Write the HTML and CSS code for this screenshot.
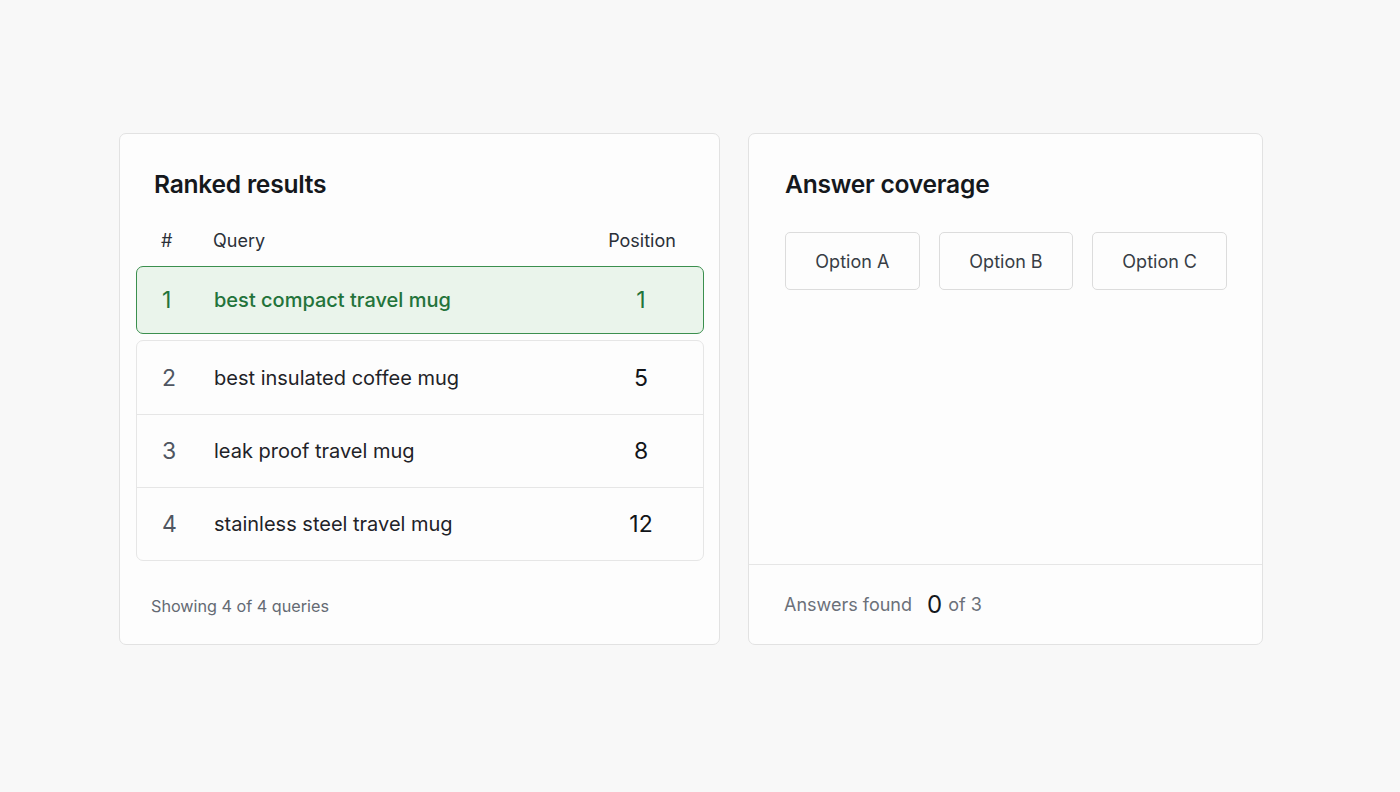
FILE: index.html
```html
<!DOCTYPE html>
<html lang="en">
<head>
<meta charset="utf-8">
<title>Ranked results</title>
<link rel="stylesheet" href="styles.css">
</head>
<body>
<main class="board">
  <section class="card card-results">
    <h2 class="card-title">Ranked results</h2>
    <div class="table-head">
      <span class="col-rank">#</span>
      <span class="col-query">Query</span>
      <span class="col-pos">Position</span>
    </div>
    <div class="row row-active">
      <span class="col-rank">1</span>
      <span class="col-query">best compact travel mug</span>
      <span class="col-pos">1</span>
    </div>
    <div class="row-list">
      <div class="row">
        <span class="col-rank">2</span>
        <span class="col-query">best insulated coffee mug</span>
        <span class="col-pos">5</span>
      </div>
      <div class="row">
        <span class="col-rank">3</span>
        <span class="col-query">leak proof travel mug</span>
        <span class="col-pos">8</span>
      </div>
      <div class="row">
        <span class="col-rank">4</span>
        <span class="col-query">stainless steel travel mug</span>
        <span class="col-pos">12</span>
      </div>
    </div>
    <p class="card-note">Showing 4 of 4 queries</p>
  </section>

  <section class="card card-coverage">
    <div class="coverage-body">
      <h2 class="card-title">Answer coverage</h2>
      <div class="options">
        <button class="option" type="button">Option A</button>
        <button class="option" type="button">Option B</button>
        <button class="option" type="button">Option C</button>
      </div>
    </div>
    <footer class="coverage-foot">
      <span class="foot-label">Answers found</span>
      <span class="foot-count">0</span>
      <span class="foot-total">of 3</span>
    </footer>
  </section>
</main>
</body>
</html>
```

FILE: styles.css
```css
* {
  box-sizing: border-box;
}

body {
  margin: 0;
  background: #f8f8f8;
  font-family: Inter, "Noto Sans", "Liberation Sans", sans-serif;
  color: #1b1f24;
}

.board {
  display: flex;
  align-items: stretch;
  gap: 28px;
  padding: 133px 0 0 119px;
}

.card {
  background: #fdfdfd;
  border: 1px solid #e2e2e2;
  border-radius: 7px;
}

.card-title {
  margin: 0;
  font-size: 24.6px;
  line-height: 30px;
  font-weight: 600;
  letter-spacing: -0.25px;
  color: #15181c;
}

/* Ranked results */
.card-results {
  width: 601px;
  padding: 35px 15px 28px 16px;
}

.card-results .card-title {
  padding-left: 18px;
}

.table-head,
.row {
  display: grid;
  grid-template-columns: 52px 1fr 100px;
  align-items: center;
  padding: 0 12px 0 25px;
}

.table-head {
  margin-top: 20px;
  height: 42px;
  font-size: 18px;
  color: #2b3038;
}

.col-pos {
  text-align: center;
}

.row {
  height: 72px;
  font-size: 20px;
  color: #1f2328;
}

.row .col-rank,
.row .col-pos {
  font-size: 23px;
}

.row .col-rank {
  color: #4f5661;
}

.row .col-pos {
  color: #111418;
}

.row-active {
  margin-top: 5px;
  height: 68px;
  background: #eaf4eb;
  border: 1.5px solid #3b8f4e;
  border-radius: 7px;
}

.row-active .col-rank,
.row-active .col-query,
.row-active .col-pos {
  color: #23733a;
}

.row-active .col-query {
  font-weight: 500;
}

.row-list {
  margin-top: 6px;
  border: 1px solid #e6e6e6;
  border-radius: 7px;
  background: #fdfdfd;
}

.row-list .row + .row {
  border-top: 1px solid #e6e6e6;
}

.row-list .row {
  height: 73px;
}

.card-note {
  margin: 35px 0 0 15px;
  font-size: 16.2px;
  line-height: 20px;
  color: #646a73;
}

/* Answer coverage */
.card-coverage {
  width: 515px;
  display: flex;
  flex-direction: column;
}

.coverage-body {
  flex: 1;
  padding: 35px 35px 0 36px;
}

.options {
  display: flex;
  gap: 19px;
  margin-top: 33px;
}

.option {
  width: 136px;
  height: 58px;
  background: #fdfdfd;
  border: 1px solid #dcdcdc;
  border-radius: 5px;
  font-family: inherit;
  font-size: 18px;
  color: #383d45;
}

.coverage-foot {
  height: 80px;
  border-top: 1px solid #e6e6e6;
  display: flex;
  align-items: center;
  padding: 0 0 0 35px;
  font-size: 18px;
  color: #6b7079;
}

.foot-count {
  margin-left: 15px;
  margin-right: 6px;
  font-size: 24px;
  color: #15181c;
}
```
